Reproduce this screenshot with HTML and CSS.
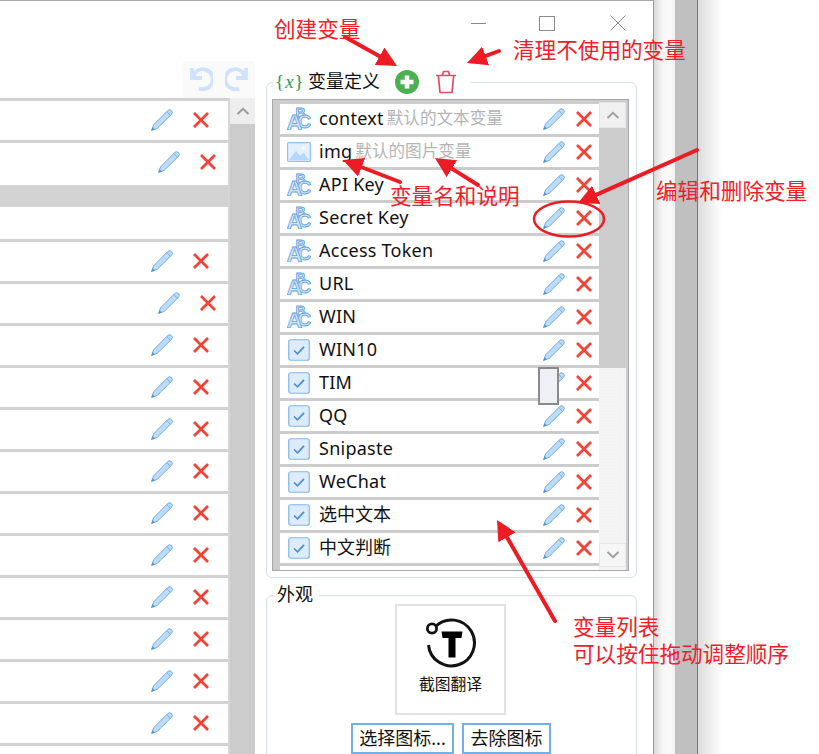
FILE: index.html
```html
<!DOCTYPE html>
<html lang="zh">
<head>
<meta charset="utf-8">
<title>变量定义</title>
<link rel="stylesheet" href="styles.css">
</head>
<body>
<svg class="defs" width="0" height="0" aria-hidden="true">
  <defs>
    <symbol id="pencil" viewBox="0 0 24 24">
      <path d="M1.5 22.5 L3.6 16.8 L18 2.3 Q19.8 1 21.6 2.6 Q23 4.3 21.8 6 L7.2 20.4 Z" fill="#bcdcf9" stroke="#6ea9e2" stroke-width=".95" stroke-linejoin="round"/>
      <path d="M16.8 3.6 L20.5 7.3" fill="none" stroke="#6ea9e2" stroke-width=".95"/>
      <path d="M1.5 22.5 L2.6 19.3 L4.8 21.4 Z" fill="#4f8fcc"/>
    </symbol>
    <symbol id="cross" viewBox="0 0 16 16">
      <path d="M1 1 L15 15 M15 1 L1 15" fill="none" stroke="#f44336" stroke-width="2.8"/>
    </symbol>
    <symbol id="check" viewBox="0 0 22 22">
      <rect x=".75" y=".75" width="20.5" height="20.5" rx="2" fill="#dcecfd" stroke="#82b6e8" stroke-width="1.2"/>
      <path d="M6 11.5 L9.5 14.8 L16 7.8" fill="none" stroke="#4b8dd2" stroke-width="1.7"/>
    </symbol>
    <symbol id="picture" viewBox="0 0 24 20">
      <rect x=".6" y=".6" width="22.8" height="18.8" rx="1" fill="#e2effd" stroke="#94c1ec" stroke-width="1.2"/>
      <path d="M2 18 L9 9 L13 14 L16.5 10.5 L22 18 Z" fill="#b5d7f9"/>
      <circle cx="17" cy="6" r="2" fill="#f6fbff"/>
    </symbol>
    <symbol id="abc" viewBox="0 0 24 24">
      <text class="abc-b" x="8.5" y="11.5">B</text>
      <text class="abc-c" x="10.5" y="21.5">C</text>
      <text class="abc-a" x="-.5" y="23.5">A</text>
    </symbol>
  </defs>
</svg>

<div class="screen">
  <div class="window">
    <section class="left">
      <div class="toolbar">
        <svg class="tool" viewBox="0 0 24 24"><path d="M3 2 V12 H13 M4 11 A10 10 0 1 1 10 22.5" fill="none" stroke="#cfe2fb" stroke-width="3.8"/></svg>
        <svg class="tool" viewBox="0 0 24 24"><path d="M21 2 V12 H11 M20 11 A10 10 0 1 0 14 22.5" fill="none" stroke="#cfe2fb" stroke-width="3.8"/></svg>
      </div>
      <div class="steps">
        <div class="step-rows">
          <div class="step"><svg class="pen"><use href="#pencil"/></svg><svg class="del"><use href="#cross"/></svg></div>
          <div class="step shifted tall"><svg class="pen"><use href="#pencil"/></svg><svg class="del"><use href="#cross"/></svg></div>
          <div class="step-band"></div>
          <div class="step-blank"></div>
          <div class="step"><svg class="pen"><use href="#pencil"/></svg><svg class="del"><use href="#cross"/></svg></div>
          <div class="step shifted"><svg class="pen"><use href="#pencil"/></svg><svg class="del"><use href="#cross"/></svg></div>
          <div class="step"><svg class="pen"><use href="#pencil"/></svg><svg class="del"><use href="#cross"/></svg></div>
          <div class="step"><svg class="pen"><use href="#pencil"/></svg><svg class="del"><use href="#cross"/></svg></div>
          <div class="step"><svg class="pen"><use href="#pencil"/></svg><svg class="del"><use href="#cross"/></svg></div>
          <div class="step"><svg class="pen"><use href="#pencil"/></svg><svg class="del"><use href="#cross"/></svg></div>
          <div class="step"><svg class="pen"><use href="#pencil"/></svg><svg class="del"><use href="#cross"/></svg></div>
          <div class="step"><svg class="pen"><use href="#pencil"/></svg><svg class="del"><use href="#cross"/></svg></div>
          <div class="step"><svg class="pen"><use href="#pencil"/></svg><svg class="del"><use href="#cross"/></svg></div>
          <div class="step"><svg class="pen"><use href="#pencil"/></svg><svg class="del"><use href="#cross"/></svg></div>
          <div class="step"><svg class="pen"><use href="#pencil"/></svg><svg class="del"><use href="#cross"/></svg></div>
          <div class="step"><svg class="pen"><use href="#pencil"/></svg><svg class="del"><use href="#cross"/></svg></div>
          <div class="step"></div>
        </div>
        <div class="step-scroll">
          <div class="scroll-up"><svg class="chev" viewBox="0 0 14 8"><path d="M1.5 7 L7 1.8 L12.5 7" fill="none" stroke="#9a9a9a" stroke-width="2"/></svg></div>
        </div>
      </div>
    </section>

    <section class="right">
      <div class="winctl">
        <span class="min"></span>
        <span class="max"></span>
        <svg class="close" viewBox="0 0 16 16"><path d="M.5 .5 L15.5 15.5 M15.5 .5 L.5 15.5" stroke="#8c8c8c" stroke-width="1" fill="none"/></svg>
      </div>

      <div class="group vars">
        <div class="legend">
          <span class="brace">{<i>x</i>}</span>
          <span class="legend-text">变量定义</span>
          <svg class="add" viewBox="0 0 24 24"><circle cx="12" cy="12" r="12" fill="#4caf50"/><path d="M12 5.5 V18.5 M5.5 12 H18.5" stroke="#fff" stroke-width="4.6"/></svg>
          <svg class="trash" viewBox="0 0 22 24"><path d="M1 5.5 H21 M7.5 5 L8.5 1.5 H13.5 L14.5 5 M3.3 5.5 L5 22.5 H17 L18.7 5.5" fill="none" stroke="#d94f63" stroke-width="1.7" stroke-linejoin="round"/></svg>
        </div>
        <div class="varlist">
          <div class="var-rows">
            <div class="var"><svg class="vicon"><use href="#abc"/></svg><span class="name">context</span><span class="desc">默认的文本变量</span><svg class="pen"><use href="#pencil"/></svg><svg class="del"><use href="#cross"/></svg></div>
            <div class="var"><svg class="vicon pic"><use href="#picture"/></svg><span class="name">img</span><span class="desc">默认的图片变量</span><svg class="pen"><use href="#pencil"/></svg><svg class="del"><use href="#cross"/></svg></div>
            <div class="var"><svg class="vicon"><use href="#abc"/></svg><span class="name">API Key</span><svg class="pen"><use href="#pencil"/></svg><svg class="del"><use href="#cross"/></svg></div>
            <div class="var"><svg class="vicon"><use href="#abc"/></svg><span class="name">Secret Key</span><svg class="pen"><use href="#pencil"/></svg><svg class="del"><use href="#cross"/></svg></div>
            <div class="var"><svg class="vicon"><use href="#abc"/></svg><span class="name">Access Token</span><svg class="pen"><use href="#pencil"/></svg><svg class="del"><use href="#cross"/></svg></div>
            <div class="var"><svg class="vicon"><use href="#abc"/></svg><span class="name">URL</span><svg class="pen"><use href="#pencil"/></svg><svg class="del"><use href="#cross"/></svg></div>
            <div class="var"><svg class="vicon"><use href="#abc"/></svg><span class="name">WIN</span><svg class="pen"><use href="#pencil"/></svg><svg class="del"><use href="#cross"/></svg></div>
            <div class="var"><svg class="vicon box"><use href="#check"/></svg><span class="name">WIN10</span><svg class="pen"><use href="#pencil"/></svg><svg class="del"><use href="#cross"/></svg></div>
            <div class="var"><svg class="vicon box"><use href="#check"/></svg><span class="name">TIM</span><svg class="pen"><use href="#pencil"/></svg><svg class="del"><use href="#cross"/></svg></div>
            <div class="var"><svg class="vicon box"><use href="#check"/></svg><span class="name">QQ</span><svg class="pen"><use href="#pencil"/></svg><svg class="del"><use href="#cross"/></svg></div>
            <div class="var"><svg class="vicon box"><use href="#check"/></svg><span class="name">Snipaste</span><svg class="pen"><use href="#pencil"/></svg><svg class="del"><use href="#cross"/></svg></div>
            <div class="var"><svg class="vicon box"><use href="#check"/></svg><span class="name">WeChat</span><svg class="pen"><use href="#pencil"/></svg><svg class="del"><use href="#cross"/></svg></div>
            <div class="var"><svg class="vicon box"><use href="#check"/></svg><span class="name cjk">选中文本</span><svg class="pen"><use href="#pencil"/></svg><svg class="del"><use href="#cross"/></svg></div>
            <div class="var"><svg class="vicon box"><use href="#check"/></svg><span class="name cjk">中文判断</span><svg class="pen"><use href="#pencil"/></svg><svg class="del"><use href="#cross"/></svg></div>
            <div class="var"></div>
          </div>
          <div class="var-scroll">
            <div class="sb-btn"><svg class="chev" viewBox="0 0 14 8"><path d="M1.5 7 L7 1.8 L12.5 7" fill="none" stroke="#a0a0a0" stroke-width="2"/></svg></div>
            <div class="sb-thumb"></div>
            <div class="sb-track"></div>
            <div class="sb-btn down"><svg class="chev" viewBox="0 0 14 8"><path d="M1.5 1 L7 6.2 L12.5 1" fill="none" stroke="#a0a0a0" stroke-width="2"/></svg></div>
            <div class="sb-end"></div>
          </div>
        </div>
      </div>

      <div class="group look">
        <div class="legend short"><span class="legend-text">外观</span></div>
        <div class="iconbox">
          <svg class="logo" viewBox="0 0 52 52">
            <path d="M10.5 9.3 A23 23 0 1 1 3.5 28" fill="none" stroke="#111" stroke-width="3"/>
            <circle cx="7" cy="11.5" r="4.6" fill="#fff" stroke="#111" stroke-width="2.8"/>
            <path d="M16.5 14.5 H37.5 L36.5 21 H30.5 V40.5 H23.5 V21 H17.5 Z" fill="#000"/>
          </svg>
          <span class="logo-text">截图翻译</span>
        </div>
        <div class="buttons">
          <button class="btn wide">选择图标...</button>
          <button class="btn">去除图标</button>
        </div>
      </div>
    </section>
  </div>
  <div class="gutter"></div>
  <div class="behind"></div>
  <div class="behind-line"></div>
  <div class="gutter2"></div>

  <div class="drag-ghost"></div>

  <svg class="marks" viewBox="0 0 819 754">
    <defs>
      <marker id="head" markerWidth="5" markerHeight="5" refX=".5" refY="2.5" orient="auto" markerUnits="strokeWidth">
        <path d="M0 0 L5 2.5 L0 5 Z" fill="#ed1c24"/>
      </marker>
    </defs>
    <g class="arrow">
      <line x1="345" y1="37" x2="381.3" y2="57.2"/>
      <line x1="499" y1="51" x2="483.8" y2="56.7"/>
      <line x1="400" y1="182" x2="359.8" y2="166.5"/>
      <line x1="478" y1="185" x2="450.2" y2="167.6"/>
      <line x1="697" y1="150" x2="594.4" y2="195.7"/>
      <line x1="555" y1="621" x2="506" y2="535.6"/>
    </g>
    <ellipse class="ring" cx="569" cy="219" rx="35" ry="17.5"/>
  </svg>

  <span class="note n-create">创建变量</span>
  <span class="note n-clean">清理不使用的变量</span>
  <span class="note n-name">变量名和说明</span>
  <span class="note n-edit">编辑和删除变量</span>
  <span class="note n-list">变量列表<br>可以按住拖动调整顺序</span>
</div>
</body>
</html>
```

FILE: styles.css
```css
* { box-sizing: border-box; }
html, body { margin: 0; padding: 0; background: #fff; }
body { font-family: "Noto Sans", "Noto Sans CJK SC", sans-serif; color: #111; }
.defs { position: absolute; }

.screen { position: relative; display: flex; width: 819px; height: 754px; overflow: hidden; background: #fff; }

.window { display: flex; flex: none; width: 654px; height: 754px; background: #fff; border-top: 1px solid #a8a8a8; border-right: 1px solid #9a9a9a; }
.gutter { flex: none; width: 21px; background: linear-gradient(90deg, #d8d8d8, #f6f6f6 40%, #fafafa 75%, #f2f2f2); }
.behind { flex: none; width: 22px; background: #c0c0c0; }
.behind-line { flex: none; width: 1px; background: #777; }
.gutter2 { flex: none; width: 24px; background: linear-gradient(90deg, #dcdcdc, #fff); }

/* left list */
.left { flex: none; width: 255px; padding-top: 60px; display: flex; flex-direction: column; }
.toolbar { align-self: flex-end; display: flex; gap: 12px; width: 72px; height: 37px; padding: 4px 0 0 6px; background: #fafafa; }
.tool { width: 24px; height: 26px; }
.steps { display: flex; flex: 1; background: #d6d6d6; min-height: 0; overflow: hidden; }
.step-rows { flex: none; width: 228px; padding-top: 3px; background: #d2d2d2; margin-right: 2px; }
.step { display: flex; align-items: center; justify-content: flex-end; gap: 19px; height: 39px; margin-bottom: 3px; padding: 0 19px 1px 0; background: #fff; }
.step.shifted { padding-right: 12px; }
.step.tall { height: 42px; padding-bottom: 4px; margin-bottom: 0; }
.step-band { height: 22px; background: #d3d3d3; }
.step-blank { height: 32px; margin-bottom: 3px; background: #fff; }
.step-scroll { flex: 1; background: #ccc; }
.scroll-up { height: 26px; display: flex; align-items: center; justify-content: center; background: #eee; }

.pen { flex: none; width: 24px; height: 24px; }
.del { flex: none; width: 16px; height: 16px; }
.chev { width: 14px; height: 8px; }

/* right column */
.right { position: relative; flex: 1; padding: 81px 0 0 11px; }
.winctl { position: absolute; left: 216px; top: 14px; display: flex; align-items: center; height: 16px; }
.min { width: 15px; height: 1px; background: #888; }
.max { width: 16px; height: 15px; margin-left: 53px; border: 1px solid #8c8c8c; }
.close { width: 16px; height: 16px; margin-left: 55px; }

.group { position: relative; width: 371px; border: 1px solid #d5e0ea; border-radius: 6px; background: #fff; }
.vars { height: 496px; padding: 16px 0 0 5px; }
.look { height: 200px; margin-top: 17px; padding-top: 8px; }
.legend { position: absolute; left: 6px; top: -14px; display: flex; align-items: center; width: 198px; height: 25px; padding-left: 4px; background: #fff; }
.legend.short { width: 46px; }
.legend-text { font-size: 18px; line-height: 25px; color: #111; }
.brace { width: 26px; margin: 0 7px 0 -2px; font-family: "Liberation Serif", serif; font-size: 19px; letter-spacing: 1px; color: #2a9a4a; white-space: nowrap; }
.add { flex: none; width: 24px; height: 24px; margin-left: 15px; }
.trash { flex: none; width: 22px; height: 24px; margin-left: 16px; }

.varlist { display: flex; width: 357px; height: 472px; background: #ccc; border: 1px solid #a8a8a8; overflow: hidden; }
.var-rows { flex: none; width: 326px; padding: 4px 0 0 7px; }
.var { display: flex; align-items: center; height: 30px; margin-bottom: 3px; padding: 0 7px 0 7px; background: #fff; }
.vicon { flex: none; width: 24px; height: 24px; margin: 0 8px 2px 0; }
.vicon.pic { height: 20px; margin-bottom: 1px; }
.vicon.box { width: 22px; height: 22px; margin: 0 9px 0 1px; }
.name { padding-bottom: 2px; font-size: 18px; line-height: 28px; letter-spacing: .25px; white-space: nowrap; color: #111; }
.name.cjk { letter-spacing: 0; }
.desc { margin-left: 3px; padding-bottom: 2px; font-size: 16.6px; line-height: 28px; white-space: nowrap; color: #b4b4b4; }
.var .pen { margin-left: auto; }
.var .del { margin-left: 10px; }
.abc-a, .abc-b, .abc-c { font-family: "Liberation Sans", sans-serif; font-weight: 700; fill: #d3e7fc; stroke: #5f9fde; stroke-width: .8px; }
.abc-a { font-size: 22px; }
.abc-b { font-size: 14px; }
.abc-c { font-size: 19px; }

.var-scroll { flex: none; display: flex; flex-direction: column; width: 27px; padding-top: 2px; background: #ccc; }
.sb-btn { flex: none; display: flex; align-items: center; justify-content: center; height: 26px; background: #f0f0f0; border: 1px solid #e6e6e6; }
.sb-btn.down { height: 24px; background: #f6f6f6; }
.sb-thumb { flex: none; height: 240px; background: #ccc; }
.sb-track { flex: none; height: 175px; background-color: #f4f4f4; background-image: radial-gradient(#efefef .6px, transparent .7px); background-size: 3px 3px; }
.sb-end { flex: 1; background: #f4f4f4; }

.iconbox { display: flex; flex-direction: column; align-items: center; width: 111px; height: 111px; margin: 0 0 0 128px; padding-top: 11px; border: 2px solid #e2e2e2; }
.logo { flex: none; width: 52px; height: 52px; }
.logo-text { margin-top: 4px; font-size: 15.8px; line-height: 22px; color: #111; }
.buttons { display: flex; gap: 8px; margin: 8px 0 0 84px; }
.btn { height: 31px; padding: 0; font-family: inherit; font-size: 18px; line-height: 27px; color: #111; background: #fff; border: 2px solid #74b0e8; border-radius: 0; }
.btn { width: 89px; }
.btn.wide { width: 103px; }

/* overlays: drag ghost and the hand-drawn annotations */
.drag-ghost { position: absolute; left: 538px; top: 367px; width: 21px; height: 38px; background: #eff0f6; border: 2px solid #8a8a8a; }
.marks { position: absolute; left: 0; top: 0; width: 819px; height: 754px; pointer-events: none; }
.arrow line { stroke: #ed1c24; stroke-width: 4; stroke-linecap: round; marker-end: url(#head); }
.ring { fill: none; stroke: #ed1c24; stroke-width: 2.5; }
.note { position: absolute; font-size: 21.6px; line-height: 27px; color: #f0202a; white-space: nowrap; }
.n-create { left: 274px; top: 15px; }
.n-clean { left: 513px; top: 36px; }
.n-name { left: 390px; top: 182px; }
.n-edit { left: 656px; top: 177px; }
.n-list { left: 573px; top: 613px; }
```
